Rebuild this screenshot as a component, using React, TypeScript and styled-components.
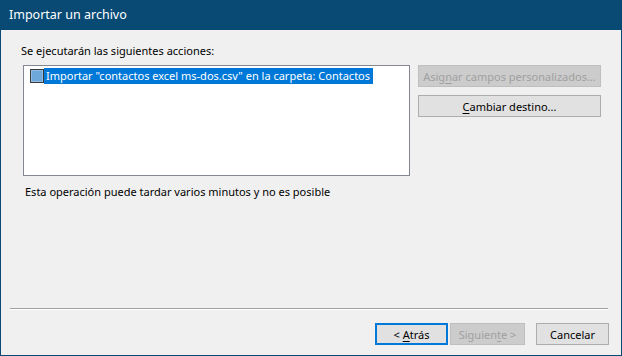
import React from 'react';
import styled, { createGlobalStyle } from 'styled-components';

const GlobalStyle = createGlobalStyle`
  html, body {
    margin: 0;
    padding: 0;
    background: #f0f0f0;
  }
  * {
    box-sizing: border-box;
  }
`

const uiFont = `"Segoe UI", "Noto Sans", "Open Sans", sans-serif`

const Window = styled.div`
  width: 622px;
  height: 356px;
  display: flex;
  flex-direction: column;
  border: 1px solid #084a74;
  background: #f0f0f0;
  font-family: ${uiFont};
  font-size: 11px;
  color: #000;
`

const TitleBar = styled.div`
  height: 29px;
  flex: 0 0 auto;
  display: flex;
  align-items: center;
  padding-left: 8px;
  padding-bottom: 2px;
  background: #084a74;
  color: #fff;
  font-size: 12.5px;
`

const Body = styled.div`
  flex: 1 1 auto;
  display: flex;
  flex-direction: column;
  padding: 13px 12px 10px 9px;
`

const TopArea = styled.div`
  display: flex;
  gap: 8px;
`

const LeftCol = styled.div`
  display: flex;
  flex-direction: column;
  width: 400px;
`

const Label = styled.div`
  padding-left: 11px;
  line-height: 16px;
  margin-bottom: 6px;
`

const ListBox = styled.div`
  margin-left: 13px;
  height: 111px;
  background: #fff;
  border: 1px solid #828790;
  padding: 2px 0 0 6px;
`

const ListItem = styled.div`
  display: flex;
  align-items: center;
  height: 16px;
`

const Check = styled.span`
  width: 14px;
  height: 14px;
  flex: 0 0 auto;
  border: 1px solid #3b3b3b;
  background: #6ea8da;
  box-shadow: inset 0 0 0 1px #8fbbe6;
`

const ItemText = styled.span`
  background: #0078d7;
  color: #fff;
  height: 16px;
  line-height: 16px;
  padding: 0 3px 0 2px;
  white-space: nowrap;
`

const Note = styled.div`
  margin-top: 8px;
  padding-left: 15px;
  line-height: 16px;
`

const RightCol = styled.div`
  display: flex;
  flex-direction: column;
  gap: 8px;
  padding-top: 22px;
`

const Button = styled.div<{ $disabled?: boolean; $default?: boolean; $w: number }>`
  width: ${({ $w }) => $w}px;
  height: 22px;
  display: flex;
  align-items: center;
  justify-content: center;
  white-space: pre;
  background: ${({ $disabled }) => ($disabled ? '#cccccc' : '#e1e1e1')};
  color: ${({ $disabled }) => ($disabled ? '#a0a0a0' : '#000')};
  border: ${({ $default, $disabled }) =>
    $default ? '2px solid #0078d7' : $disabled ? '1px solid #bfbfbf' : '1px solid #adadad'};

  u {
    text-decoration: underline;
    text-underline-offset: 2px;
  }
`

const Spacer = styled.div`
  flex: 1 1 auto;
`

const Separator = styled.div`
  height: 2px;
  border-top: 1px solid #a0a0a0;
  border-bottom: 1px solid #fff;
  margin: 0 1px 13px 0;
`

const Footer = styled.div`
  display: flex;
  justify-content: flex-end;
  align-items: center;
`

const FooterGap = styled.div<{ $w: number }>`
  width: ${({ $w }) => $w}px;
`

export default function App() {
  return (
    <>
      <GlobalStyle />
      <Window>
        <TitleBar>Importar un archivo</TitleBar>
        <Body>
          <TopArea>
            <LeftCol>
              <Label>Se ejecutarán las siguientes acciones:</Label>
              <ListBox>
                <ListItem>
                  <Check />
                  <ItemText>Importar "contactos excel ms-dos.csv" en la carpeta: Contactos</ItemText>
                </ListItem>
              </ListBox>
              <Note>Esta operación puede tardar varios minutos y no es posible</Note>
            </LeftCol>
            <RightCol>
              <Button $w={183} $disabled>
                <span>Asig<u>n</u>ar campos personalizados...</span>
              </Button>
              <Button $w={183}>
                <span><u>C</u>ambiar destino...</span>
              </Button>
            </RightCol>
          </TopArea>
          <Spacer />
          <Separator />
          <Footer>
            <Button $w={73} $default>
              <span>&lt; <u>A</u>trás</span>
            </Button>
            <FooterGap $w={2} />
            <Button $w={75} $disabled>
              <span>Siguien<u>t</u>e &gt;</span>
            </Button>
            <FooterGap $w={11} />
            <Button $w={73}>
              <span>Cancelar</span>
            </Button>
          </Footer>
        </Body>
      </Window>
    </>
  )
}
